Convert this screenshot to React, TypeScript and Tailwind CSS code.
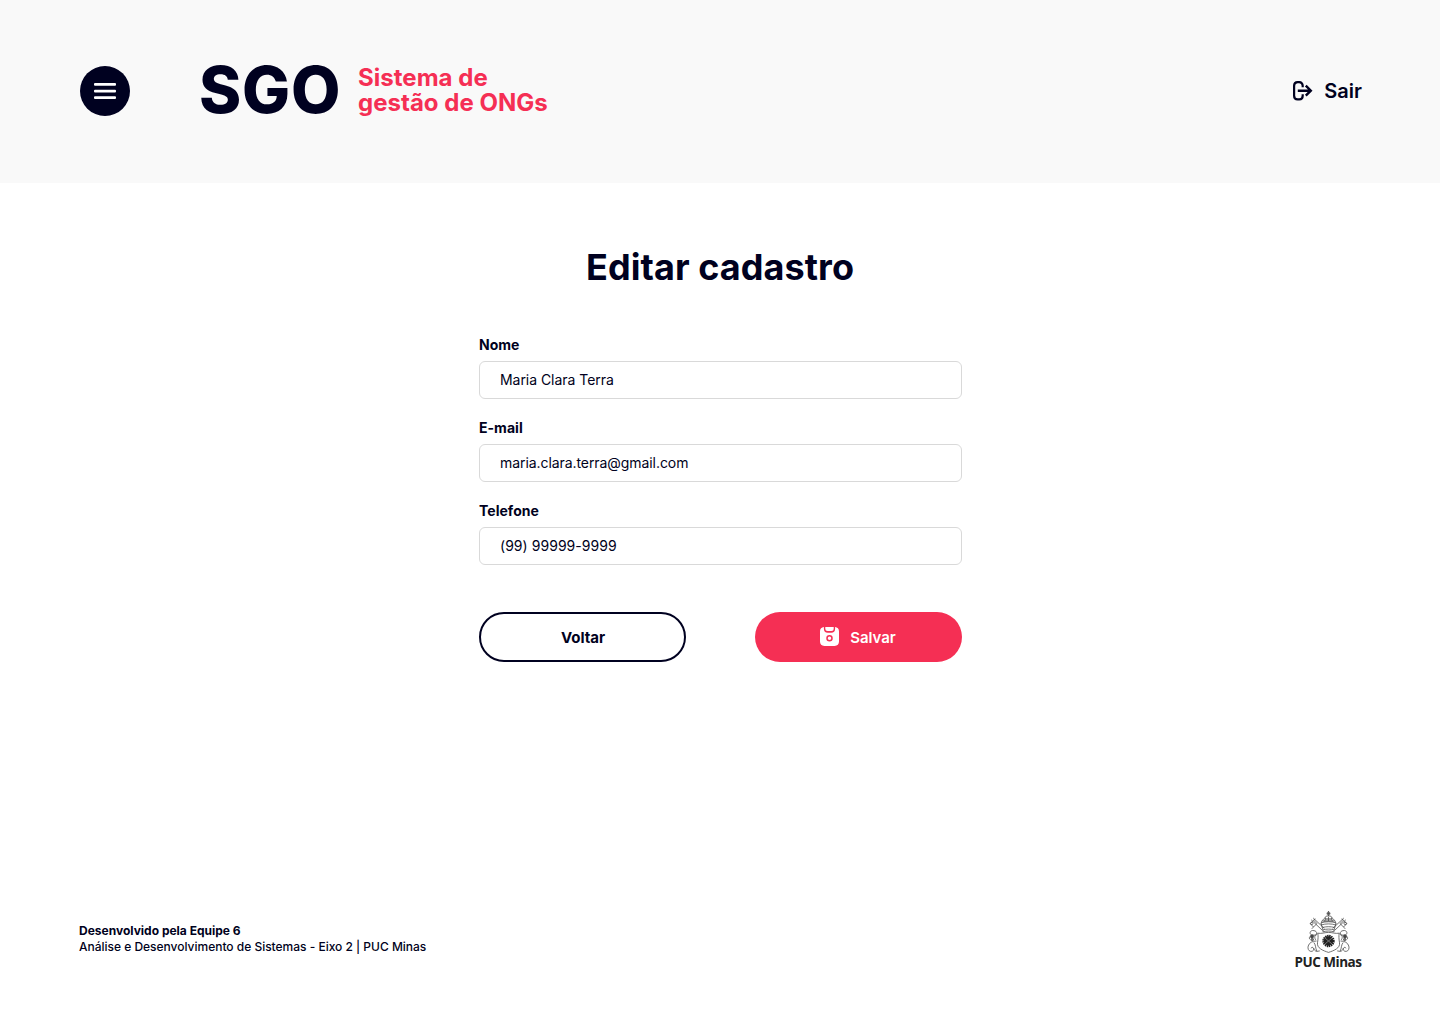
import React from "react";

const fields = [
  { id: "nome", label: "Nome", value: "Maria Clara Terra", type: "text", tracking: "tracking-[-0.003em]" },
  { id: "email", label: "E-mail", value: "maria.clara.terra@gmail.com", type: "email", tracking: "tracking-[-0.005em]" },
  { id: "telefone", label: "Telefone", value: "(99) 99999-9999", type: "tel", tracking: "tracking-[0.003em]" },
];

function MenuIcon() {
  return (
    <svg width="22" height="16" viewBox="0 0 22 16" fill="#fff">
      <rect y="0" width="22" height="2.7" rx="1" />
      <rect y="6.7" width="22" height="2.7" rx="1" />
      <rect y="13.2" width="22" height="2.7" rx="1" />
    </svg>
  );
}

function ExitIcon() {
  return (
    <svg width="20" height="20" viewBox="0 0 20 20" fill="none" stroke="#000120" strokeWidth="2.2">
      <path d="M9.7 6.2V4.8C9.7 2.6 8.4 1.2 6.3 1.2H4.6C2.4 1.2 1.1 2.6 1.1 4.8v9.9c0 2.2 1.3 3.6 3.5 3.6h1.7c2.1 0 3.4-1.4 3.4-3.6v-1.5" />
      <path d="M4.8 9.7h12.6M12.8 4.7l5 5-5 5" strokeWidth="2.4" />
    </svg>
  );
}

function SaveIcon() {
  return (
    <svg width="19" height="19" viewBox="0 0 19 19">
      <path
        fill="#fff"
        d="M3.9 0.1C1.5 0.4 0 1.9 0 4.4v10.2C0 17.4 1.6 19 4.4 19h10.2c2.8 0 4.4-1.6 4.4-4.4V4.4C19 1.9 17.5 0.4 15.1 0.1V1.7c0 2.7-1.3 4-3.8 4H7.7C5.2 5.7 3.9 4.4 3.9 1.7Z"
      />
      <path fill="#fff" d="M5.3 0h8.4v1.6c0 1.7-.8 2.5-2.3 2.5H7.6C6.1 4.1 5.3 3.3 5.3 1.6Z" />
      <circle cx="9.5" cy="11.3" r="2.5" fill="#fff" stroke="#f52f54" strokeWidth="1.5" />
    </svg>
  );
}

function SideFigure() {
  return (
    <g>
      <path d="M15.5 19.5 4.2 8.8M17.4 17.5 6.2 7" />
      <path d="M3.2 12.7 6.6 9.2 10 12.5 6.5 16ZM6.5 16 4.8 17.8M6.6 9.2 8.4 7.8" />
      <circle cx="4.8" cy="12.4" r="1.2" />
      <path d="M5.5 19.5c-3 .5-3 3.5-1 4.5l4.7.2c1.3-1.5.9-4.7-3.7-4.7Z" />
      <circle cx="5" cy="25.4" r="1.6" fill="#444" />
      <circle cx="5.3" cy="28.5" r="1.2" fill="#777" />
      <path d="M9.8 22.5c-2.5 2-2.5 4.5-1 6.5M3 25.5c-1 1-.8 2.5.5 3.3M9.5 30C5.5 30 2.3 31.5 1.2 35c-.7 2.4.2 5 2.6 5.4 2.5.2 3.2-1.6 2.7-3.1-.5-1.4-2.2-1.2-2.4 0M6.8 31.5c2 2 1.5 5.3 3 8.7" />
      <path d="M6.8 37.2c.4 1.8 1.3 3 3 3.2l3-.5" />
    </g>
  );
}

function Emblem() {
  return (
    <svg width="43" height="43" viewBox="0 0 43 43" fill="none" stroke="#444" strokeWidth="0.75">
      <circle cx="21.5" cy="2.5" r="1.5" />
      <path d="M21.5 0v5M20 2.5h3" />
      <path d="M14 12.4C14.8 8.5 18 7.5 19.4 5h4.2c1.4 2.5 4.6 3.5 5.4 7.4M14.2 11.8c4.8-1.4 9.8-1.4 14.6 0M14 14c5-1.5 10-1.5 15 0M14 12l1.8 6.9c3.8-1.1 7.6-1.1 11.4 0L29 12M18.5 6.5l-.8 4M21.5 6v4M24.5 6.5l.8 4M15.5 16.5c4-1.1 8-1.1 12 0" />
      <path d="M16 19v1.9c3.7-1.2 7.3-1.2 11 0V19" />
      <path d="M15.5 10h12M18 8h7" strokeWidth="1.1" />
      <SideFigure />
      <g transform="translate(43 0) scale(-1 1)">
        <SideFigure />
      </g>
      <path d="M10.8 22.2c3.7.7 7.3-.8 10.7-.8s7 1.5 10.7.8c-.5 2.7-.3 6 .3 9.5.9 5.5-5.7 8-11 9.7-5.3-1.7-11.9-4.2-11-9.7.6-3.5.8-6.8.3-9.5Z" fill="#fff" />
      <circle cx="21.5" cy="30" r="4.7" fill="#222" stroke="#222" strokeWidth="3" strokeDasharray="1.3 0.55" />
      <path d="m18 27 3.5 3 3.5-3M18 33l3.5-3 3.5 3" stroke="#999" strokeWidth=".7" />
    </svg>
  );
}

export default function App() {
  return (
    <div className="flex h-[1024px] flex-col bg-white font-['Inter',sans-serif] text-[#000120]">
      <header className="flex h-[183px] shrink-0 items-center bg-[#f9f9f9] pr-[78px] pb-[2px] pl-20">
        <button aria-label="Menu" className="flex size-[50px] items-center justify-center rounded-full bg-[#000120]">
          <MenuIcon />
        </button>
        <div className="ml-[69px] flex items-center">
          <span className="w-[141px] pb-[2px] text-[64px] leading-[72px] font-extrabold tracking-[0.012em] whitespace-nowrap">SGO</span>
          <p className="ml-[18px] pb-px text-2xl leading-[25px] font-bold tracking-[0.001em] text-[#f52f54]">
            Sistema de
            <br />
            gestão de ONGs
          </p>
        </div>
        <button className="ml-auto flex items-center gap-[11px] text-xl font-semibold">
          <ExitIcon />
          Sair
        </button>
      </header>

      <main className="flex flex-1 justify-center pt-[62px] pl-px">
        <div className="w-[483px]">
          <h1 className="pr-px text-center text-4xl leading-[44px] font-bold tracking-[0.002em]">Editar cadastro</h1>
          <form className="mt-[47px]">
            <div className="flex flex-col gap-5">
              {fields.map((f) => (
                <div key={f.id} className="flex flex-col">
                  <label htmlFor={f.id} className="h-[25px] text-sm leading-[18px] font-bold tracking-[0.002em]">
                    {f.label}
                  </label>
                  <input
                    id={f.id}
                    type={f.type}
                    defaultValue={f.value}
                    className={`h-[38px] rounded-md border border-[#d9d9d9] bg-white px-5 pb-[2px] text-sm outline-none ${f.tracking}`}
                  />
                </div>
              ))}
            </div>
            <div className="mt-[47px] flex justify-between">
              <button type="button" className="h-[50px] w-[207px] rounded-full border-2 border-[#000120] pt-[2px] pl-px text-[15px] font-bold">
                Voltar
              </button>
              <button type="button" className="flex h-[50px] w-[207px] items-center justify-center gap-[11px] rounded-full bg-[#f52f54] pr-px text-[15px] font-semibold text-white">
                <span className="pb-[2px]">
                  <SaveIcon />
                </span>
                <span className="pt-[2px]">Salvar</span>
              </button>
            </div>
          </form>
        </div>
      </main>

      <footer className="flex h-[114px] shrink-0 items-start justify-between pr-[78px] pl-[79px]">
        <div className="mt-[13px] text-xs leading-4">
          <p className="font-bold">Desenvolvido pela Equipe 6</p>
          <p className="font-medium tracking-[-0.001em]">Análise e Desenvolvimento de Sistemas - Eixo 2 | PUC Minas</p>
        </div>
        <div className="flex w-[68px] flex-col items-center pt-px">
          <Emblem />
          <span className="font-['Open_Sans',sans-serif] text-[13.5px] leading-4 font-bold tracking-[-0.5px] whitespace-nowrap text-[#222]">PUC Minas</span>
        </div>
      </footer>
    </div>
  );
}
